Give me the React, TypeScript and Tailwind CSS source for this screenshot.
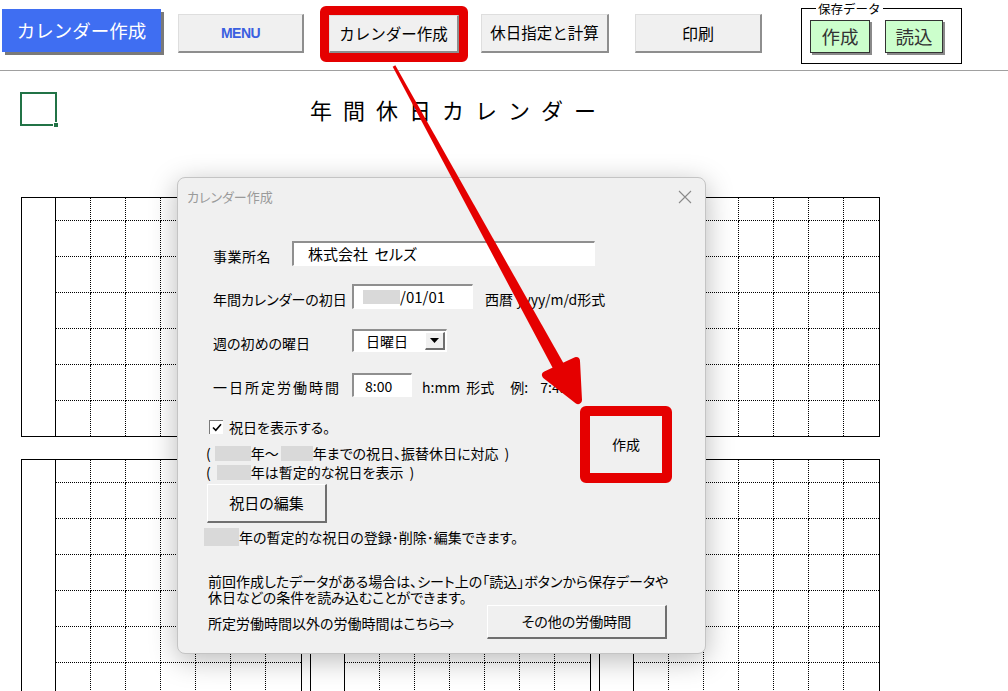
import React from "react";

const btnGray =
  "flex items-center justify-center bg-[#f0f0f0] border-t border-l border-r-2 border-b-2 border-t-[#dedede] border-l-[#dedede] border-r-[#8e8e8e] border-b-[#8e8e8e]";

const btnDialog =
  "flex items-center justify-center bg-[#f0f0f0] border-t border-l border-r-2 border-b-2 border-t-white border-l-white border-r-[#6f6f6f] border-b-[#6f6f6f]";

const sunken =
  "bg-white border-t-2 border-l-2 border-r border-b border-t-[#8f8f8f] border-l-[#8f8f8f] border-r-white border-b-white";

const Block = ({ rows }: { rows: string }) => {
  const cells = [];
  for (let r = 0; r < 7; r++) {
    for (let c = 0; c < 7; c++) {
      cells.push(
        <div
          key={`${r}-${c}`}
          className={`border-dotted border-black ${c < 6 ? "border-r" : ""} ${r < 6 ? "border-b" : ""}`}
        />
      );
    }
  }
  return (
    <div className="flex border border-black">
      <div className="w-[34px] border-r border-black" />
      <div className={`grid grid-cols-[repeat(7,35px)] ${rows}`}>{cells}</div>
    </div>
  );
};

const GridRow = ({ className }: { className: string }) => (
  <div className={`flex gap-[8px] ml-[21px] ${className}`}>
    <Block rows="grid-rows-[23px_repeat(5,36px)_35px]" />
    <Block rows="grid-rows-[23px_repeat(5,36px)_35px]" />
    <Block rows="grid-rows-[23px_repeat(5,36px)_35px]" />
  </div>
);

const Blur = ({ className }: { className: string }) => (
  <span className={`inline-block bg-[#d9d9d9] ${className}`} />
);

const Dialog = () => (
  <div className="absolute left-[177px] top-[177px] w-[529px] h-[477px] rounded-[8px] bg-[#f0f0f0] border border-[#c4c4c4] shadow-[0_6px_28px_rgba(0,0,0,0.28)] text-[14px] text-black [font-feature-settings:'palt']">
    <div className="flex items-center h-[38px] pl-[9px] pr-[13px]">
      <span className="text-[13px] text-[#9a9a9a]">カレンダー作成</span>
      <svg className="ml-auto" width="14" height="14" viewBox="0 0 14 14">
        <path d="M1 1 L13 13 M13 1 L1 13" stroke="#8a8a8a" strokeWidth="1.1" />
      </svg>
    </div>

    <div className="flex items-center mt-[25px] h-[25px] pl-[35px]">
      <span className="w-[79px] pt-[5px] tracking-[0.5px]">事業所名</span>
      <div className={`w-[303px] h-[25px] flex items-center pl-[14px] text-[15px] ${sunken}`}>
        株式会社&nbsp;&nbsp;セルズ
      </div>
    </div>

    <div className="flex items-center mt-[18px] h-[25px] pl-[35px]">
      <span className="w-[139px] pt-[5px]">年間カレンダーの初日</span>
      <div className={`w-[121px] h-[25px] flex items-center pl-[9px] text-[15px] ${sunken}`}>
        <Blur className="w-[37px] h-[14px]" />
        <span>/01/01</span>
      </div>
      <span className="ml-[12px] pt-[5px]">西暦 yyyy/m/d形式</span>
    </div>

    <div className="flex items-center mt-[20px] h-[23px] pl-[35px]">
      <span className="w-[139px] pt-[5px]">週の初めの曜日</span>
      <div className={`w-[95px] h-[23px] flex items-center pl-[12px] pr-[1px] ${sunken}`}>
        <span>日曜日</span>
        <div className={`ml-auto w-[20px] h-[18px] ${btnDialog}`}>
          <svg width="9" height="5" viewBox="0 0 9 5">
            <path d="M0 0 H9 L4.5 5 Z" fill="#000" />
          </svg>
        </div>
      </div>
    </div>

    <div className="flex items-center mt-[21px] h-[24px] pl-[35px]">
      <span className="w-[139px] pt-[5px] tracking-[2px]">一日所定労働時間</span>
      <div className={`w-[60px] h-[24px] flex items-start pt-[1px] pl-[11px] ${sunken}`}>
        8:00
      </div>
      <span className="ml-[10px] pt-[5px] flex">
        <span>h:mm</span>
        <span className="ml-[6px]">形式</span>
        <span className="ml-[16px]">例:</span>
        <span className="ml-[12px]">7:45</span>
      </span>
    </div>

    <div className="flex mt-[9px]">
      <div className="flex flex-col pl-[28px] pt-[14px]">
        <div className="flex items-center h-[14px]">
          <div className="ml-[3px] w-[14px] h-[14px] bg-white border-t border-l border-[#7a7a7a] border-r-[#e0e0e0] border-b-[#e0e0e0] flex items-center justify-center">
            <svg width="10" height="9" viewBox="0 0 10 9">
              <path d="M1 4.5 L3.8 7.3 L9 1.2" stroke="#000" strokeWidth="1.6" fill="none" />
            </svg>
          </div>
          <span className="ml-[6px]">祝日を表示する。</span>
        </div>
        <div className="flex items-center h-[19px] mt-[10px]">
          <span>(</span>
          <Blur className="ml-[4px] w-[36px] h-[15px]" />
          <span>年～</span>
          <Blur className="ml-[2px] w-[32px] h-[15px]" />
          <span>年までの祝日、振替休日に対応</span>
          <span className="ml-[6px]">)</span>
        </div>
        <div className="flex items-center h-[19px]">
          <span>(</span>
          <Blur className="ml-[6px] w-[34px] h-[15px]" />
          <span>年は暫定的な祝日を表示</span>
          <span className="ml-[6px]">)</span>
        </div>
        <div className={`mt-[2px] ml-[1px] w-[120px] h-[39px] text-[15px] ${btnDialog}`}>祝日の編集</div>
        <div className="flex items-center mt-[5px] h-[18px] -ml-[2px]">
          <Blur className="w-[35px] h-[18px]" />
          <span>年の暫定的な祝日の登録･削除･編集できます。</span>
        </div>
      </div>
      <div className="ml-auto mr-[33px] w-[92px] h-[77px] border-[10px] border-[#e50000] rounded-[6px] flex items-center justify-center">
        作成
      </div>
    </div>

    <p className="mt-[27px] pl-[30px] leading-[16px]">
      前回作成したデータがある場合は、シート上の「読込」ボタンから保存データや
      <br />
      休日などの条件を読み込むことができます。
    </p>

    <div className="flex items-center h-[34px] pl-[30px]">
      <span className="pt-[3px]">所定労働時間以外の労働時間はこちら⇒</span>
      <div className={`ml-auto mr-[38px] w-[180px] h-[34px] ${btnDialog}`}>その他の労働時間</div>
    </div>
  </div>
);

const Arrow = () => (
  <svg className="absolute left-0 top-0 pointer-events-none" width="1008" height="691" viewBox="0 0 1008 691">
    <polygon points="392.7,66.7 395.3,65.3 571.3,377.1 560.7,382.9" fill="#e50000" />
    <polygon
      points="578,400 576,361 546,375"
      fill="#e50000"
      stroke="#e50000"
      strokeWidth="8"
      strokeLinejoin="round"
    />
  </svg>
);

export default function App() {
  return (
    <div className="relative w-[1008px] h-[691px] overflow-hidden bg-white font-['Noto_Sans_CJK_JP',sans-serif]">
      <div className="flex items-start h-[71px] border-b border-[#a0a0a0]">
        <div className="ml-[2px] mt-[9px] w-[159px] h-[43px] bg-[#3f6ef2] shadow-[3px_3px_0_#7a7a7a] flex items-center justify-center text-white text-[18.5px]">
          カレンダー作成
        </div>
        <div className={`ml-[17px] mt-[14px] w-[126px] h-[39px] ${btnGray}`}>
          <span className="font-['Liberation_Sans',sans-serif] font-bold text-[14px] tracking-[-0.5px] text-[#3a5fe0]">MENU</span>
        </div>
        <div className="ml-[16px] mt-[6px] w-[148px] h-[56px] border-[9px] border-[#e50000] rounded-[6px]">
          <div className={`w-full h-full text-[15.5px] ${btnGray}`}>カレンダー作成</div>
        </div>
        <div className={`ml-[13px] mt-[14px] w-[128px] h-[39px] text-[15.5px] ${btnGray}`}>休日指定と計算</div>
        <div className={`ml-[26px] mt-[14px] w-[127px] h-[39px] text-[16px] ${btnGray}`}>印刷</div>
        <div className="relative ml-[39px] mt-[8px] w-[161px] h-[56px] border border-black flex items-start pt-[11px] pl-[8px]">
          <span className="absolute -top-[8px] left-[14px] bg-white px-[2px] text-[12.5px] leading-[15px]">保存データ</span>
          <div className="w-[60px] h-[33px] bg-[#ccffcc] border border-[#333] shadow-[2px_2px_0_#8a8a8a] flex items-center justify-center text-[18.5px] text-[#333]">
            作成
          </div>
          <div className="ml-[15px] w-[58px] h-[33px] bg-[#ccffcc] border border-[#333] shadow-[2px_2px_0_#8a8a8a] flex items-center justify-center text-[18.5px] text-[#333]">
            読込
          </div>
        </div>
      </div>

      <div className="flex items-center h-[35px] mt-[20px]">
        <div className="relative ml-[20px] w-[37px] h-[34px] border-2 border-[#217346]">
          <div className="absolute -right-[4px] -bottom-[4px] w-[6px] h-[6px] bg-[#217346] border border-white" />
        </div>
        <div className="ml-[253px] text-[22px] tracking-[11px] leading-none">年間休日カレンダー</div>
      </div>

      <GridRow className="mt-[71px]" />
      <GridRow className="mt-[22px]" />

      <Dialog />
      <Arrow />
    </div>
  );
}
